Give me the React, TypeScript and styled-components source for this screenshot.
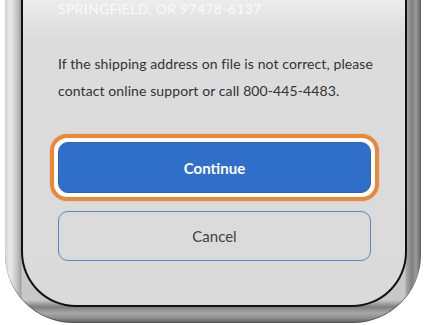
import React from "react";
import styled, { createGlobalStyle } from "styled-components";

const Global = createGlobalStyle`
  html, body { margin: 0; padding: 0; background: #ffffff; }
  body { font-family: "Lato", "Liberation Sans", sans-serif; overflow: hidden; }
  * { box-sizing: border-box; }
`;

const Frame = styled.div`
  margin-left: 5px;
  width: 416px;
  padding: 0 14px 16px 16px;
  border-radius: 0 0 68px 68px;
  background:
    linear-gradient(to right, #cfcfcf 0px, #ececec 5px, #c4c4c4 12px, #a0a0a0 16px, rgba(0,0,0,0) 17px, rgba(0,0,0,0) 400px, #a8a8a8 401px, #7e7e7e 407px, #9c9c9c 411px, #5e5e5e 416px),
    linear-gradient(to bottom, #c8c8c8 0, #c8c8c8 300px, #7e7e7e 307px, #a8a8a8 313px, #8e8e8e 318px, #5a5a5a 323px);
  box-shadow: inset 0 -1px 0 #555;
`;

const Screen = styled.div`
  height: 307px;
  border: 2px solid #111111;
  border-top: 0;
  border-radius: 0 0 55px 55px;
  background: linear-gradient(to bottom, #ececec 0px, #dcdcdc 38px, #dadada 100%);
  padding: 0 34px 0 35px;
  display: flex;
  flex-direction: column;
`;

const Address = styled.div`
  font-size: 14px;
  line-height: 18px;
  color: #fafafa;
  letter-spacing: 0.3px;
`;

const Notice = styled.p`
  margin: 32px -12px 0 0;
  font-size: 14px;
  line-height: 27px;
  color: #333333;
  letter-spacing: 0.1px;
`;

const FocusRing = styled.div`
  margin: 30px -8px 0;
  padding: 4px;
  border: 4px solid #ef8631;
  border-radius: 17px;
  background: #ffffff;
  box-shadow: 0 0 0 1px #c9d6e4;
`;

const Button = styled.button<{ $primary?: boolean }>`
  display: block;
  width: 100%;
  height: ${(p) => (p.$primary ? "51px" : "50px")};
  border-radius: 10px;
  font-family: "Lato", "Liberation Sans", sans-serif;
  font-size: 15px;
  font-weight: ${(p) => (p.$primary ? 700 : 400)};
  color: ${(p) => (p.$primary ? "#ffffff" : "#3f3f3f")};
  background: ${(p) => (p.$primary ? "#2f6fc9" : "transparent")};
  border: ${(p) => (p.$primary ? "1px solid #2a63b6" : "1.5px solid #5a87c4")};
  cursor: pointer;
  padding: 0;
`;

const CancelWrap = styled.div`
  margin-top: 10px;
`;

export default function App() {
  return (
    <>
      <Global />
      <Frame>
        <Screen>
          <Address>SPRINGFIELD, OR 97478-6137</Address>
          <Notice>
            If the shipping address on file is not correct, please contact online support or call 800-445-4483.
          </Notice>
          <FocusRing>
            <Button $primary>Continue</Button>
          </FocusRing>
          <CancelWrap>
            <Button>Cancel</Button>
          </CancelWrap>
        </Screen>
      </Frame>
    </>
  );
}
